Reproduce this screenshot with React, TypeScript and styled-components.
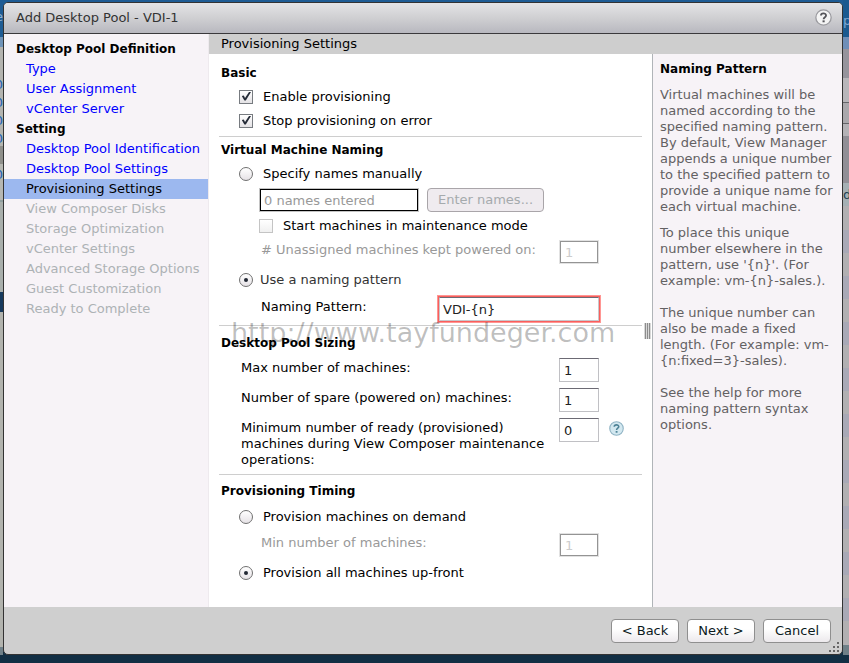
import React, { useState } from "react";
import styled, { createGlobalStyle, css } from "styled-components";

const GlobalStyle = createGlobalStyle`
  * { box-sizing: border-box; }
  html, body, #root { height: 100%; }
  body {
    margin: 0;
    background: #122f44;
    font-family: "DejaVu Sans", Verdana, sans-serif;
    font-size: 13px;
    line-height: 16px;
    color: #000;
  }
  button, input { font: inherit; }
`;

const Desktop = styled.div`
  display: grid;
  grid-template-columns: 3px minmax(0, 1fr) 6px;
  min-height: 100%;
  padding-bottom: 8px;
  background: linear-gradient(#1e5c94, #1e5c94) top / 100% 40px no-repeat, #122f44;
`;

const LeftEdge = styled.div`
  display: flex;
  flex-direction: column;
  align-items: flex-end;
  overflow: hidden;
  background: linear-gradient(
    #1e5c94 0 37px, #6f93b8 37px 47px, #b4b4b0 47px 146px, #8f8f8b 146px 164px,
    #b6b7b2 164px 200px, #90a0a0 200px 202px, #a9afac 202px 292px, #173a5e 292px 312px,
    #b2b3ae 312px 647px, #6f8088 647px
  );
`;

const RightEdge = styled.div`
  display: flex;
  flex-direction: column;
  align-items: flex-start;
  overflow: hidden;
  background: linear-gradient(
    #1b5a90 0 37px, #6f8fb8 37px 49px, #96949c 49px 78px, #b8b6ba 78px 102px,
    #66666a 102px 103px, #aaa8ac 103px 123px, #66666a 123px 124px, #b4b2b6 124px 136px,
    #918f96 136px 183px, #a5b0b4 183px 206px, #b2b0b2 206px 230px, #a9a9b6 230px 253px,
    #b2b0b2 253px 276px, #a9a9b6 276px 299px, #b2b0b2 299px 322px, #a9a9b6 322px 345px,
    #b2b0b2 345px 368px, #a9a9b6 368px 391px, #b2b0b2 391px 414px, #a9a9b6 414px 437px,
    #b2b0b2 437px 460px, #a9a9b6 460px 483px, #b2b0b2 483px 506px, #a9a9b6 506px 529px,
    #b2b0b2 529px 552px, #a9a9b6 552px 575px, #b2b0b2 575px 598px, #a9a9b6 598px 621px,
    #b2b0b2 621px 645px, #6f8088 645px
  );
`;

const EdgeText = styled.span<{ $gap: number; $color: string }>`
  margin-top: ${(p) => p.$gap}px;
  line-height: 18px;
  color: ${(p) => p.$color};
`;

const Dialog = styled.form`
  display: flex;
  flex-direction: column;
  margin-top: 2px;
  border: 1px solid #333;
  border-radius: 5px;
  overflow: hidden;
  background: #cfcfcf;
`;

const TitleBar = styled.header`
  display: flex;
  align-items: center;
  justify-content: space-between;
  height: 31px;
  padding: 0 10px 1px 12px;
  border-bottom: 1px solid #3a393c;
  background: linear-gradient(#e4e4e6, #cfcfd2 50%, #b8b8bf);
  color: #333;
`;

const Title = styled.h1`
  margin: 0;
  font-size: 13px;
  font-weight: 400;
`;

const IconButton = styled.button`
  display: grid;
  padding: 0;
  border: 0;
  background: none;
`;

const Columns = styled.div`
  display: grid;
  grid-template-columns: 205px minmax(0, 1fr);
  flex: 1;
`;

const Nav = styled.nav`
  padding-top: 5px;
  background: #f7f3f7;
  border-right: 1px solid #eeeaee;
`;

const NavHeading = styled.h2`
  margin: 0;
  padding-left: 12px;
  font-size: 12px;
  font-weight: 700;
  line-height: 20px;
`;

const NavList = styled.ul`
  margin: 0;
  padding: 0;
  list-style: none;
`;

const navItem = css`
  display: block;
  padding-left: 22px;
  line-height: 20px;
  white-space: nowrap;
`;

const NavLink = styled.a<{ $current?: boolean }>`
  ${navItem}
  color: ${(p) => (p.$current ? "#000" : "#00f")};
  background: ${(p) => (p.$current ? "#9cb8ef" : "transparent")};
  text-decoration: none;
`;

const NavPending = styled.span`
  ${navItem}
  color: #adb2b5;
`;

const Content = styled.div`
  display: flex;
  flex-direction: column;
`;

const ContentTitle = styled.h2`
  margin: 0;
  padding-left: 12px;
  background: #cecece;
  font-size: 13px;
  font-weight: 400;
  line-height: 20px;
`;

const Panels = styled.div`
  display: grid;
  grid-template-columns: minmax(0, 1fr) 190px;
  flex: 1;
`;

const Settings = styled.main`
  display: grid;
  grid-template-columns: minmax(0, 1fr) 10px;
  padding-left: 10px;
  background: #fff;
`;

const Grip = styled.span`
  align-self: center;
  justify-self: center;
  width: 7px;
  height: 16px;
  background: repeating-linear-gradient(90deg, #d8d8d8 0 1px, #8c8c8c 1px 2px);
`;

const Section = styled.section<{ $top: number; $bottom: number }>`
  position: relative;
  padding-top: ${(p) => p.$top}px;
  padding-bottom: ${(p) => p.$bottom}px;
  & + & { border-top: 1px solid #cecece; }
`;

const SectionTitle = styled.h3`
  position: relative;
  margin: 0;
  padding-left: 2px;
  font-size: 12px;
  font-weight: 700;
  line-height: 24px;
`;

const Option = styled.label<{ $nested?: boolean; $tall?: boolean; $muted?: boolean }>`
  display: flex;
  align-items: center;
  gap: ${(p) => (p.$muted ? 7 : 10)}px;
  height: ${(p) => (p.$tall ? 28 : 24)}px;
  padding-left: ${(p) => (p.$nested ? 40 : 20)}px;
  color: ${(p) => (p.$muted ? "#333" : "#000")};
`;

const Mark = styled.span`
  display: grid;
  > * { grid-area: 1 / 1; place-self: center; margin: 0; }
  svg { pointer-events: none; }
`;

const CheckInput = styled.input`
  appearance: none;
  width: 14px;
  height: 14px;
  border: 1px solid #777b80;
  background: linear-gradient(#fff, #e4e2e5);
  &:disabled { border-color: #c4c4c4; background: linear-gradient(#fff, #f0f0f0); }
`;

const RadioInput = styled.input`
  appearance: none;
  width: 14px;
  height: 14px;
  border: 1px solid #707070;
  border-radius: 50%;
  background: linear-gradient(#fff, #e6e2e6);
`;

const NamesRow = styled.div`
  display: flex;
  align-items: center;
  gap: 8px;
  height: 28px;
  padding-left: 40px;
`;

const Field = styled.div<{ $height: number; $value: number }>`
  display: grid;
  grid-template-columns: ${(p) => p.$value}px auto;
  justify-content: start;
  align-items: center;
  min-height: ${(p) => p.$height}px;
  padding-left: 42px;
`;

const FieldLabel = styled.label<{ $disabled?: boolean }>`
  padding-bottom: 4px;
  color: ${(p) => (p.$disabled ? "#999" : "#000")};
`;

const SizingField = styled.div`
  display: grid;
  grid-template-columns: 318px 40px auto;
  align-items: start;
  justify-content: start;
  min-height: 30px;
  padding: 3px 0 0 22px;
`;

const SizingLabel = styled.label`
  margin-top: 2px;
`;

const NumberInput = styled.input`
  width: 40px;
  height: 24px;
  padding: 0 4px;
  border: 1px solid #c0c0c4;
  border-top-color: #6c6a74;
  background: #fff;
  color: #222;
  &:disabled {
    width: 38px;
    height: 22px;
    margin: 1px;
    border: 1px solid #949494;
    outline: 1px solid #e2e2e2;
    color: #ccc;
  }
`;

const NamesInput = styled.input`
  width: 158px;
  height: 22px;
  padding: 0 3px;
  margin: 1px;
  border: 1px solid #000;
  outline: 1px solid #c4c4c4;
  background: #fff;
  &::placeholder { color: #999; opacity: 1; }
`;

const PatternInput = styled.input`
  width: 160px;
  height: 24px;
  margin: 2px;
  padding: 0 3px;
  border: 1px solid #c8c8cc;
  border-top-color: #6c6a74;
  outline: none;
  box-shadow: 0 0 0 1px #f95f5d, 0 0 0 2px #ff9693;
  background: #fff;
  color: #222;
`;

const PushButton = styled.button<{ $wide?: boolean }>`
  width: ${(p) => (p.$wide ? 117 : 68)}px;
  height: 24px;
  padding: 0;
  border: 1px solid #8f8f8f;
  border-radius: 4px;
  background: linear-gradient(#fff, #fff 40%, #ece9ec);
  color: #0b1a1c;
  &:disabled { border-color: #a9a5a9; background: #efebef; color: #a5aaad; }
`;

const HelpLink = styled(IconButton)`
  margin: 3px 0 0 10px;
`;

const Watermark = styled.span`
  position: absolute;
  top: -9px;
  left: 12px;
  overflow: hidden;
  font-size: 27px;
  line-height: 32px;
  white-space: nowrap;
  color: rgba(0, 0, 0, 0.26);
  pointer-events: none;
`;

const HelpPanel = styled.aside`
  padding: 7px 8px 0 7px;
  border-left: 1px solid #b0b4b8;
  background: #f7f3f7;
  color: #636163;
`;

const HelpTitle = styled.h3`
  margin: 0 0 10px;
  font-size: 12px;
  font-weight: 700;
  line-height: 16px;
  color: #000;
`;

const HelpText = styled.p<{ $gap: number }>`
  margin: 0 0 ${(p) => p.$gap}px;
`;

const Footer = styled.footer`
  position: relative;
  display: flex;
  justify-content: flex-end;
  align-items: center;
  gap: 8px;
  height: 47px;
  padding: 0 11px 0 0;
`;

const Resize = styled.svg`
  position: absolute;
  right: 2px;
  bottom: 1px;
`;

function Check(props: { checked?: boolean; disabled?: boolean }) {
  const [on, setOn] = useState(!!props.checked);
  return (
    <Mark>
      <CheckInput type="checkbox" checked={on} disabled={props.disabled} onChange={() => setOn(!on)} />
      {on && (
        <svg width="14" height="14" viewBox="0 0 14 14" fill="#252c38">
          <path d="M2.8 6 L4.8 5.4 L6 8 L10 2 L12 2 L6.8 10.6 L5.4 10.6 Z" />
        </svg>
      )}
    </Mark>
  );
}

function Radio(props: { name: string; checked: boolean; onSelect: () => void }) {
  return (
    <Mark>
      <RadioInput type="radio" name={props.name} checked={props.checked} onChange={props.onSelect} />
      {props.checked && (
        <svg width="14" height="14" viewBox="0 0 14 14">
          <circle cx="7" cy="7" r="2" fill="#222833" />
        </svg>
      )}
    </Mark>
  );
}

function HelpIcon({ blue }: { blue?: boolean }) {
  const mark = blue ? "#4d8296" : "#55555a";
  const size = blue ? 15 : 17;
  return (
    <svg width={size} height={size} viewBox="0 0 16 16" fill="none">
      <circle
        cx="8"
        cy="8"
        r="7.2"
        fill={blue ? "#d3e8f0" : "#f4f4f4"}
        stroke={blue ? "#8fb3c4" : "#9a9a9f"}
        strokeWidth="1.2"
      />
      <path d="M5.6 6.2 C5.6 3.4 10.4 3.4 10.4 6.1 C10.4 7.7 8.1 7.7 8.1 9.6" stroke={mark} strokeWidth="1.7" />
      <rect x="7.1" y="10.7" width="2" height="1.8" fill={mark} />
    </svg>
  );
}

const setupDone = ["Type", "User Assignment", "vCenter Server"];
const settingsDone = ["Desktop Pool Identification", "Desktop Pool Settings", "Provisioning Settings"];
const settingsPending = [
  "View Composer Disks",
  "Storage Optimization",
  "vCenter Settings",
  "Advanced Storage Options",
  "Guest Customization",
  "Ready to Complete",
];

const helpParagraphs = [
  {
    gap: 10,
    text: "Virtual machines will be named according to the specified naming pattern. By default, View Manager appends a unique number to the specified pattern to provide a unique name for each virtual machine.",
  },
  {
    gap: 16,
    text: "To place this unique number elsewhere in the pattern, use '{n}'. (For example: vm-{n}-sales.).",
  },
  {
    gap: 16,
    text: "The unique number can also be made a fixed length. (For example: vm-{n:fixed=3}-sales).",
  },
  { gap: 0, text: "See the help for more naming pattern syntax options." },
];

export default function App() {
  const [naming, setNaming] = useState("pattern");
  const [timing, setTiming] = useState("upfront");
  return (
    <>
      <GlobalStyle />
      <Desktop>
        <LeftEdge aria-hidden>
          <EdgeText $gap={8} $color="#8fb2d2">e</EdgeText>
          <EdgeText $gap={50} $color="#1d62b8">0</EdgeText>
          <EdgeText $gap={0} $color="#1d62b8">0</EdgeText>
          <EdgeText $gap={0} $color="#1d62b8">0</EdgeText>
          <EdgeText $gap={0} $color="#1d62b8">0</EdgeText>
          <EdgeText $gap={18} $color="#1d62b8">0</EdgeText>
        </LeftEdge>
        <Dialog onSubmit={(e) => e.preventDefault()}>
          <TitleBar>
            <Title>Add Desktop Pool - VDI-1</Title>
            <IconButton type="button" aria-label="Help"><HelpIcon /></IconButton>
          </TitleBar>
          <Columns>
            <Nav>
              <NavHeading>Desktop Pool Definition</NavHeading>
              <NavList>
                {setupDone.map((t) => <li key={t}><NavLink href="#">{t}</NavLink></li>)}
              </NavList>
              <NavHeading>Setting</NavHeading>
              <NavList>
                {settingsDone.map((t) => (
                  <li key={t}><NavLink href="#" $current={t === "Provisioning Settings"}>{t}</NavLink></li>
                ))}
                {settingsPending.map((t) => <li key={t}><NavPending>{t}</NavPending></li>)}
              </NavList>
            </Nav>
            <Content>
              <ContentTitle>Provisioning Settings</ContentTitle>
              <Panels>
                <Settings>
                  <div>
                    <Section $top={7} $bottom={3}>
                      <SectionTitle>Basic</SectionTitle>
                      <Option><Check checked />Enable provisioning</Option>
                      <Option><Check checked />Stop provisioning on error</Option>
                    </Section>
                    <Section $top={1} $bottom={1}>
                      <SectionTitle>Virtual Machine Naming</SectionTitle>
                      <Option>
                        <Radio name="naming" checked={naming === "manual"} onSelect={() => setNaming("manual")} />
                        Specify names manually
                      </Option>
                      <NamesRow>
                        <NamesInput aria-label="Names" placeholder="0 names entered" readOnly />
                        <PushButton type="button" $wide disabled>Enter names...</PushButton>
                      </NamesRow>
                      <Option $nested><Check disabled />Start machines in maintenance mode</Option>
                      <Field $height={28} $value={298}>
                        <FieldLabel htmlFor="unassigned" $disabled># Unassigned machines kept powered on:</FieldLabel>
                        <NumberInput id="unassigned" defaultValue="1" disabled />
                      </Field>
                      <Option $tall $muted>
                        <Radio name="naming" checked={naming === "pattern"} onSelect={() => setNaming("pattern")} />
                        Use a naming pattern
                      </Option>
                      <Field $height={30} $value={176}>
                        <FieldLabel htmlFor="pattern">Naming Pattern:</FieldLabel>
                        <PatternInput id="pattern" defaultValue="VDI-{n}" />
                      </Field>
                    </Section>
                    <Section $top={5} $bottom={6}>
                      <Watermark>http://www.tayfundeger.com</Watermark>
                      <SectionTitle>Desktop Pool Sizing</SectionTitle>
                      <SizingField>
                        <SizingLabel htmlFor="max">Max number of machines:</SizingLabel>
                        <NumberInput id="max" defaultValue="1" />
                      </SizingField>
                      <SizingField>
                        <SizingLabel htmlFor="spare">Number of spare (powered on) machines:</SizingLabel>
                        <NumberInput id="spare" defaultValue="1" />
                      </SizingField>
                      <SizingField>
                        <SizingLabel htmlFor="ready">
                          Minimum number of ready (provisioned) machines during View Composer maintenance operations:
                        </SizingLabel>
                        <NumberInput id="ready" defaultValue="0" />
                        <HelpLink type="button" aria-label="Help"><HelpIcon blue /></HelpLink>
                      </SizingField>
                    </Section>
                    <Section $top={4} $bottom={19}>
                      <SectionTitle>Provisioning Timing</SectionTitle>
                      <Option $tall>
                        <Radio name="timing" checked={timing === "demand"} onSelect={() => setTiming("demand")} />
                        Provision machines on demand
                      </Option>
                      <Field $height={28} $value={298}>
                        <FieldLabel htmlFor="minimum" $disabled>Min number of machines:</FieldLabel>
                        <NumberInput id="minimum" defaultValue="1" disabled />
                      </Field>
                      <Option $tall>
                        <Radio name="timing" checked={timing === "upfront"} onSelect={() => setTiming("upfront")} />
                        Provision all machines up-front
                      </Option>
                    </Section>
                  </div>
                  <Grip />
                </Settings>
                <HelpPanel>
                  <HelpTitle>Naming Pattern</HelpTitle>
                  {helpParagraphs.map((p) => <HelpText key={p.text} $gap={p.gap}>{p.text}</HelpText>)}
                </HelpPanel>
              </Panels>
            </Content>
          </Columns>
          <Footer>
            <PushButton type="button">&lt; Back</PushButton>
            <PushButton type="submit">Next &gt;</PushButton>
            <PushButton type="button">Cancel</PushButton>
            <Resize width="11" height="11" viewBox="0 0 11 11" fill="#666">
              <path d="M8 0h2v2h-2zM8 4h2v2h-2zM4 4h2v2h-2zM8 8h2v2h-2zM4 8h2v2h-2zM0 8h2v2h-2z" />
            </Resize>
          </Footer>
        </Dialog>
        <RightEdge aria-hidden>
          <EdgeText $gap={12} $color="#7fa8d0">p</EdgeText>
          <EdgeText $gap={156} $color="#1d3f50">d</EdgeText>
        </RightEdge>
      </Desktop>
    </>
  );
}
